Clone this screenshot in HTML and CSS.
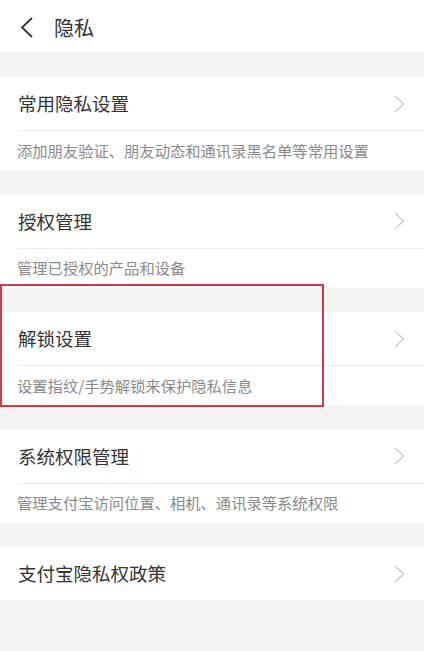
FILE: index.html
```html
<!DOCTYPE html>
<html lang="zh-CN">
<head>
    <meta charset="UTF-8">
    <meta name="viewport" content="width=device-width, initial-scale=1.0">
    <title>隐私</title>
    <link rel="stylesheet" href="styles.css">
</head>
<body>
    <div class="screen">
        <div class="header">
            <svg class="back" width="14" height="21" viewBox="0 0 14 21">
                <path d="M12 1 L2 10.5 L12 20" fill="none" stroke="#333" stroke-width="1.8"/>
            </svg>
            <span class="header-title">隐私</span>
        </div>

        <div class="group">
            <div class="row">
                <span class="row-title">常用隐私设置</span>
                <svg class="arrow" width="11" height="18" viewBox="0 0 11 18"><path d="M1 1 L9.5 9 L1 17" fill="none" stroke="#c8c8c8" stroke-width="1.2"/></svg>
            </div>
            <div class="desc">添加朋友验证、朋友动态和通讯录黑名单等常用设置</div>
        </div>

        <div class="group">
            <div class="row">
                <span class="row-title">授权管理</span>
                <svg class="arrow" width="11" height="18" viewBox="0 0 11 18"><path d="M1 1 L9.5 9 L1 17" fill="none" stroke="#c8c8c8" stroke-width="1.2"/></svg>
            </div>
            <div class="desc">管理已授权的产品和设备</div>
        </div>

        <div class="group">
            <div class="row">
                <span class="row-title">解锁设置</span>
                <svg class="arrow" width="11" height="18" viewBox="0 0 11 18"><path d="M1 1 L9.5 9 L1 17" fill="none" stroke="#c8c8c8" stroke-width="1.2"/></svg>
            </div>
            <div class="desc">设置指纹/手势解锁来保护隐私信息</div>
        </div>

        <div class="group">
            <div class="row">
                <span class="row-title">系统权限管理</span>
                <svg class="arrow" width="11" height="18" viewBox="0 0 11 18"><path d="M1 1 L9.5 9 L1 17" fill="none" stroke="#c8c8c8" stroke-width="1.2"/></svg>
            </div>
            <div class="desc">管理支付宝访问位置、相机、通讯录等系统权限</div>
        </div>

        <div class="group">
            <div class="row">
                <span class="row-title">支付宝隐私权政策</span>
                <svg class="arrow" width="11" height="18" viewBox="0 0 11 18"><path d="M1 1 L9.5 9 L1 17" fill="none" stroke="#c8c8c8" stroke-width="1.2"/></svg>
            </div>
        </div>

        <div class="highlight"></div>
    </div>
</body>
</html>
```

FILE: styles.css
```css
body {
    margin: 0;
    background-color: #fff;
    font-family: 'Noto Sans CJK SC', 'Noto Sans', sans-serif;
}

.screen {
    position: relative;
    width: 424px;
    height: 651px;
    background-color: #f4f4f4;
    overflow: hidden;
}

.header {
    height: 52px;
    background-color: #fff;
    display: flex;
    align-items: center;
    padding-left: 20px;
}

.back {
    margin-top: 3px;
}

.header-title {
    margin-left: 20px;
    font-size: 20px;
    color: #333;
    line-height: 1;
    margin-top: 3px;
}

.group {
    margin-top: 25px;
    background-color: #fff;
}

.group + .group {
    margin-top: 24.5px;
}

.row {
    height: 53px;
    display: flex;
    align-items: center;
    justify-content: space-between;
    padding: 0 19px 0 18px;
}

.row-title {
    font-size: 18.5px;
    color: #333;
    line-height: 1;
}

.arrow {
    display: block;
}

.desc {
    margin-left: 17px;
    height: 39px;
    border-top: 1px solid #eeeeee;
    display: flex;
    align-items: center;
    font-size: 15.3px;
    color: #8a8a8a;
    line-height: 1;
}

.highlight {
    position: absolute;
    left: 0;
    top: 284px;
    width: 320px;
    height: 119px;
    border: 2px solid #d23b45;
}
```
